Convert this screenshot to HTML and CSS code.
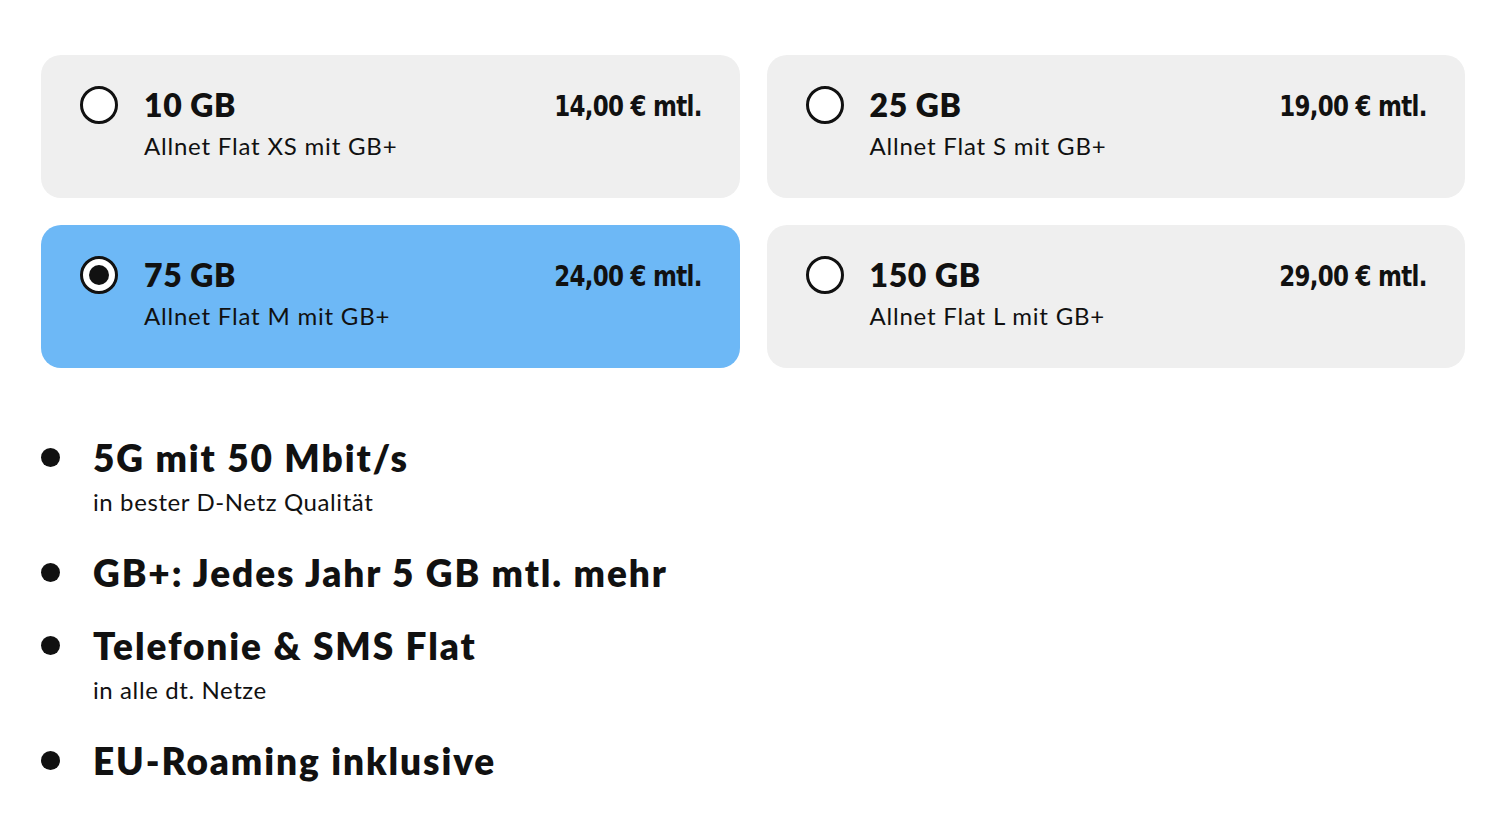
FILE: index.html
```html
<!DOCTYPE html>
<html lang="de">
<head>
<meta charset="utf-8">
<title>Tarife</title>
<link rel="stylesheet" href="styles.css">
</head>
<body>
<main class="page">
  <section class="plans">
    <div class="plan">
      <span class="radio"></span>
      <div class="plan-text">
        <div class="plan-title">10 GB</div>
        <div class="plan-sub">Allnet Flat XS mit GB+</div>
      </div>
      <div class="plan-price">14,00 € mtl.</div>
    </div>
    <div class="plan">
      <span class="radio"></span>
      <div class="plan-text">
        <div class="plan-title">25 GB</div>
        <div class="plan-sub">Allnet Flat S mit GB+</div>
      </div>
      <div class="plan-price">19,00 € mtl.</div>
    </div>
    <div class="plan selected">
      <span class="radio checked"></span>
      <div class="plan-text">
        <div class="plan-title">75 GB</div>
        <div class="plan-sub">Allnet Flat M mit GB+</div>
      </div>
      <div class="plan-price">24,00 € mtl.</div>
    </div>
    <div class="plan">
      <span class="radio"></span>
      <div class="plan-text">
        <div class="plan-title">150 GB</div>
        <div class="plan-sub">Allnet Flat L mit GB+</div>
      </div>
      <div class="plan-price">29,00 € mtl.</div>
    </div>
  </section>
  <ul class="features">
    <li class="feature has-sub">
      <div class="feature-title">5G mit 50 Mbit/s</div>
      <div class="feature-sub">in bester D-Netz Qualität</div>
    </li>
    <li class="feature">
      <div class="feature-title">GB+: Jedes Jahr 5 GB mtl. mehr</div>
    </li>
    <li class="feature has-sub">
      <div class="feature-title">Telefonie &amp; SMS Flat</div>
      <div class="feature-sub">in alle dt. Netze</div>
    </li>
    <li class="feature">
      <div class="feature-title">EU-Roaming inklusive</div>
    </li>
  </ul>
</main>
</body>
</html>
```

FILE: styles.css
```css
* { box-sizing: border-box; }
html, body { margin: 0; padding: 0; background: #fff; }
body {
  font-family: Lato, "Open Sans", sans-serif;
  color: #111;
}
.page {
  padding: 55px 45px 0 41px;
}
.plans {
  display: grid;
  grid-template-columns: 1fr 1fr;
  column-gap: 27px;
  row-gap: 27px;
}
.plan {
  display: flex;
  align-items: flex-start;
  height: 143px;
  border-radius: 20px;
  background: #efefef;
  padding: 31px 38px 0 39px;
}
.plan.selected { background: #6db8f6; }
.radio {
  flex: none;
  width: 38px;
  height: 38px;
  border: 3px solid #111;
  border-radius: 50%;
  background: #fff;
  position: relative;
}
.radio.checked::after {
  content: "";
  position: absolute;
  left: 6px;
  top: 6px;
  width: 20px;
  height: 20px;
  border-radius: 50%;
  background: #111;
}
.plan-text {
  flex: 1;
  margin-left: 26px;
}
.plan-title {
  font-weight: 800;
  font-size: 32px;
  line-height: 38px;
  letter-spacing: 0.6px;
}
.plan-sub {
  font-weight: 400;
  font-size: 24px;
  line-height: 30px;
  margin-top: 7px;
  letter-spacing: 0.8px;
}
.plan-price {
  font-family: "DejaVu Sans Condensed", "DejaVu Sans", sans-serif;
  font-weight: 700;
  font-size: 29px;
  line-height: 38px;
  letter-spacing: -0.8px;
  transform: scaleX(0.88);
  transform-origin: right center;
  margin-top: 1px;
}
.features {
  list-style: none;
  margin: 66px 0 0 0;
  padding: 0;
}
.feature {
  position: relative;
  padding-left: 52px;
  margin-bottom: 25px;
}
.feature.has-sub { margin-bottom: 29px; }
.feature::before {
  content: "";
  position: absolute;
  left: 0;
  top: 14px;
  width: 19px;
  height: 19px;
  border-radius: 50%;
  background: #111;
}
.feature-title {
  font-weight: 800;
  font-size: 37px;
  line-height: 48px;
  letter-spacing: 1.9px;
}
.feature-sub {
  font-weight: 400;
  font-size: 24px;
  line-height: 36px;
  margin-top: 2px;
  letter-spacing: 0.6px;
}
```
